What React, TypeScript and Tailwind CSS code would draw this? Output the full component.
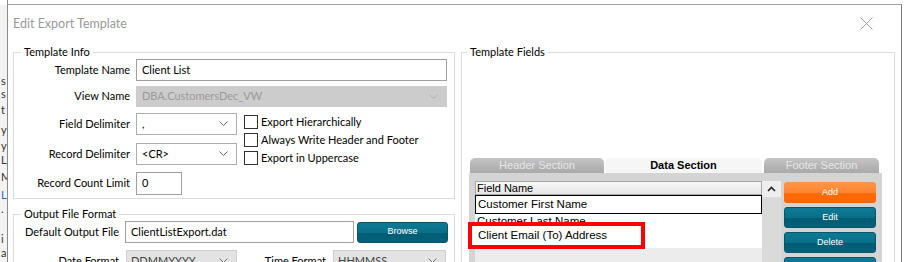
import React from "react";

const Chevron = ({ color = "#555" }: { color?: string }) => (
  <svg width="9" height="6" viewBox="0 0 9 6" className="shrink-0">
    <polyline points="0.5,0.5 4.5,4.5 8.5,0.5" fill="none" stroke={color} strokeWidth="1" />
  </svg>
);

const Select = ({
  value,
  w,
  disabled,
  h = "h-[22px]",
}: {
  value: string;
  w: string;
  disabled?: boolean;
  h?: string;
}) => (
  <div
    className={`${w} ${h} flex items-center justify-between pl-[5px] pr-[8px] border ${
      disabled ? "bg-[#cccccc] border-[#cccccc] text-[#9a9a9a]" : "bg-white border-[#adadad] text-black"
    }`}
  >
    <span>{value}</span>
    <Chevron color={disabled ? "#b0b0b0" : "#666"} />
  </div>
);

const Check = ({ label }: { label: string }) => (
  <div className="h-[18px] flex items-center whitespace-nowrap">
    <div className="w-[14px] h-[14px] border border-[#333] bg-white mr-[3px]" />
    <span>{label}</span>
  </div>
);

const TealBtn = ({ label, w = "w-[92px]" }: { label: string; w?: string }) => (
  <div
    className={`${w} h-[21px] shrink-0 rounded-[3px] flex items-center justify-center text-white text-[9px] font-['Liberation_Sans',sans-serif] bg-[linear-gradient(#0c7a94_0%,#0a6f88_50%,#005c73_51%,#00617a_100%)] border border-[#0a5568]`}
  >
    {label}
  </div>
);

const frags = [
  { h: 68, c: "" },
  { h: 13, c: "s" },
  { h: 13, c: "s" },
  { h: 16, c: "t" },
  { h: 20, c: "y" },
  { h: 16, c: "y" },
  { h: 14, c: "L" },
  { h: 17, c: "M" },
  { h: 18, c: "L" },
  { h: 14, c: "." },
  { h: 30, c: "i" },
  { h: 14, c: "a" },
  { h: 14, c: "i" },
];

export default function App() {
  return (
    <div className="w-[904px] h-[262px] overflow-hidden bg-white flex text-[11px] text-black font-['Lato',sans-serif] relative">
      {/* background window strip */}
      <div className="w-[8px] h-full shrink-0 flex flex-col border-r border-[#8a8a8a] overflow-hidden text-[11px] leading-none">
        <div className="h-[5px] shrink-0 bg-white" />
        <div className="flex-1 bg-[#f3f3f3] flex flex-col">
          {frags.map((f, i) => (
            <div
              key={i}
              style={{ height: f.h }}
              className={`shrink-0 flex items-end pl-[1px] ${i === 8 ? "text-[#2563eb]" : "text-[#333]"}`}
            >
              {f.c}
            </div>
          ))}
        </div>
      </div>

      {/* dialog */}
      <div className="w-[894px] h-[258px] shrink-0 mt-[4px] bg-white border-t border-t-[#a3a3a3] border-r border-r-[#7c7c7c] flex flex-col overflow-hidden">
        <div className="h-[40px] shrink-0 flex items-start justify-between pl-[5px] pr-[28px] pt-[9px]">
          <span className="text-[12.5px] leading-[20px] text-[#999999]">Edit Export Template</span>
          <svg width="13" height="13" viewBox="0 0 13 13" className="mt-[3px]">
            <path d="M0.5 0.5 L12.5 12.5 M12.5 0.5 L0.5 12.5" stroke="#a0a0a0" strokeWidth="1" />
          </svg>
        </div>

        <div className="flex pl-[5px] shrink-0">
          {/* left column */}
          <div className="w-[442px] shrink-0 flex flex-col">
            <fieldset className="border border-[#dcdcdc] w-[442px]">
              <legend className="ml-[7px] px-[3px] leading-[14px]">Template Info</legend>
              <div className="flex flex-col pb-[3px]">
                <div className="flex items-center h-[22px]">
                  <div className="w-[116px] text-right">Template Name</div>
                  <div className="ml-[6px] w-[311px] h-[22px] border border-[#a0a0a0] flex items-center pl-[5px]">
                    Client List
                  </div>
                </div>
                <div className="flex items-center mt-[5px]">
                  <div className="w-[116px] text-right">View Name</div>
                  <div className="ml-[6px]">
                    <Select value="DBA.CustomersDec_VW" w="w-[311px]" h="h-[21px]" disabled />
                  </div>
                </div>
                <div className="flex mt-[6px]">
                  <div className="flex flex-col">
                    <div className="flex items-center h-[22px]">
                      <div className="w-[116px] text-right">Field Delimiter</div>
                      <div className="ml-[6px]">
                        <Select value="," w="w-[101px]" />
                      </div>
                    </div>
                    <div className="flex items-center h-[22px] mt-[8px]">
                      <div className="w-[116px] text-right">Record Delimiter</div>
                      <div className="ml-[6px]">
                        <Select value="<CR>" w="w-[101px]" />
                      </div>
                    </div>
                  </div>
                  <div className="ml-[7px] flex flex-col">
                    <Check label="Export Hierarchically" />
                    <Check label="Always Write Header and Footer" />
                    <Check label="Export in Uppercase" />
                  </div>
                </div>
                <div className="flex items-center mt-[5px]">
                  <div className="w-[116px] text-right">Record Count Limit</div>
                  <div className="ml-[6px] w-[46px] h-[23px] border border-[#a0a0a0] flex items-start pt-[2px] pl-[5px]">
                    0
                  </div>
                </div>
              </div>
            </fieldset>

            <fieldset className="border border-[#dcdcdc] w-[442px] mt-[8px]">
              <legend className="ml-[7px] px-[3px] leading-[14px]">Output File Format</legend>
              <div className="flex flex-col">
                <div className="flex items-center">
                  <div className="w-[105px] text-right whitespace-nowrap">Default Output File</div>
                  <div className="ml-[6px] w-[229px] h-[22px] border border-[#a0a0a0] flex items-center pl-[5px]">
                    ClientListExport.dat
                  </div>
                  <div className="ml-[3px]">
                    <TealBtn label="Browse" w="w-[91px]" />
                  </div>
                </div>
                <div className="flex items-center mt-[7px] whitespace-nowrap">
                  <div className="w-[105px] text-right">Date Format</div>
                  <div className="ml-[7px] w-[111px] h-[22px] border border-[#cfcfcf] bg-[#e3e3e3] flex items-center justify-between pl-[4px] pr-[8px] text-[#444]">
                    <span>DDMMYYYY</span>
                    <Chevron color="#777" />
                  </div>
                  <div className="w-[89px] text-right">Time Format</div>
                  <div className="ml-[7px] w-[113px] h-[22px] border border-[#cfcfcf] bg-[#e3e3e3] flex items-center justify-between pl-[4px] pr-[8px] text-[#444]">
                    <span>HHMMSS</span>
                    <Chevron color="#777" />
                  </div>
                </div>
              </div>
            </fieldset>
          </div>

          {/* right column */}
          <fieldset className="ml-[6px] w-[434px] shrink-0 border border-[#dcdcdc] h-[230px]">
            <legend className="ml-[5px] px-[3px] leading-[14px]">Template Fields</legend>
            <div className="h-[99px]" />
            <div className="flex ml-[8px] font-['Liberation_Sans',sans-serif] text-[11px] leading-none">
              <div className="w-[134px] h-[15px] rounded-t-[5px] bg-[linear-gradient(#c4c4c4,#a9a9a9)] text-[#e6e6e6] flex items-center justify-center">
                Header Section
              </div>
              <div className="ml-[1px] w-[157px] h-[15px] rounded-t-[5px] bg-[#f6f6f6] font-bold flex items-center justify-center">
                Data Section
              </div>
              <div className="ml-[2px] w-[115px] h-[15px] rounded-t-[5px] bg-[linear-gradient(#c4c4c4,#a9a9a9)] text-[#e6e6e6] flex items-center justify-center">
                Footer Section
              </div>
            </div>
            <div className="ml-[7px] w-[413px] h-[100px] bg-[#d4d4d4] flex pl-[6px] pt-[8px] font-['Liberation_Sans',sans-serif]">
              <div className="w-[287px] flex flex-col bg-[#ececec]">
                <div className="h-[14px] border border-[#a8a8a8] bg-[linear-gradient(#f8f8f8,#e6e6e6)] flex items-center pl-[1px] text-[11px] leading-none">
                  Field Name
                </div>
                <div className="h-[19px] border border-black bg-white flex items-center pl-[2px] text-[11.5px] leading-none">
                  Customer First Name
                </div>
                <div className="h-[16px] bg-white flex items-center pl-[2px] text-[11.5px] leading-none">
                  Customer Last Name
                </div>
                <div className="h-[18px] bg-white" />
              </div>
              <div className="w-[19px] bg-[#dadada] flex flex-col">
                <div className="h-[16px] bg-[#eeeeee] flex items-center justify-center">
                  <svg width="9" height="6" viewBox="0 0 9 6">
                    <polyline points="1,5 4.5,1.5 8,5" fill="none" stroke="#222" strokeWidth="1.6" />
                  </svg>
                </div>
              </div>
              <div className="ml-[3px] w-[92px] flex flex-col gap-[4px] pt-[1px]">
                <div className="w-[92px] h-[21px] shrink-0 rounded-[3px] flex items-center justify-center text-white text-[9px] bg-[linear-gradient(#ff9548_0%,#ff8533_50%,#ff6a0a_51%,#ff6600_100%)]">
                  Add
                </div>
                <TealBtn label="Edit" />
                <TealBtn label="Delete" />
                <TealBtn label="" />
              </div>
            </div>
          </fieldset>
        </div>
      </div>

      {/* red annotation box */}
      <div className="absolute left-[468px] top-[222px] w-[177px] h-[27px] border-[4px] border-[#ff0000] bg-white flex items-center pl-[6px] font-['Liberation_Sans',sans-serif] text-[11.5px] leading-none">
        Client Email (To) Address
      </div>
    </div>
  );
}
